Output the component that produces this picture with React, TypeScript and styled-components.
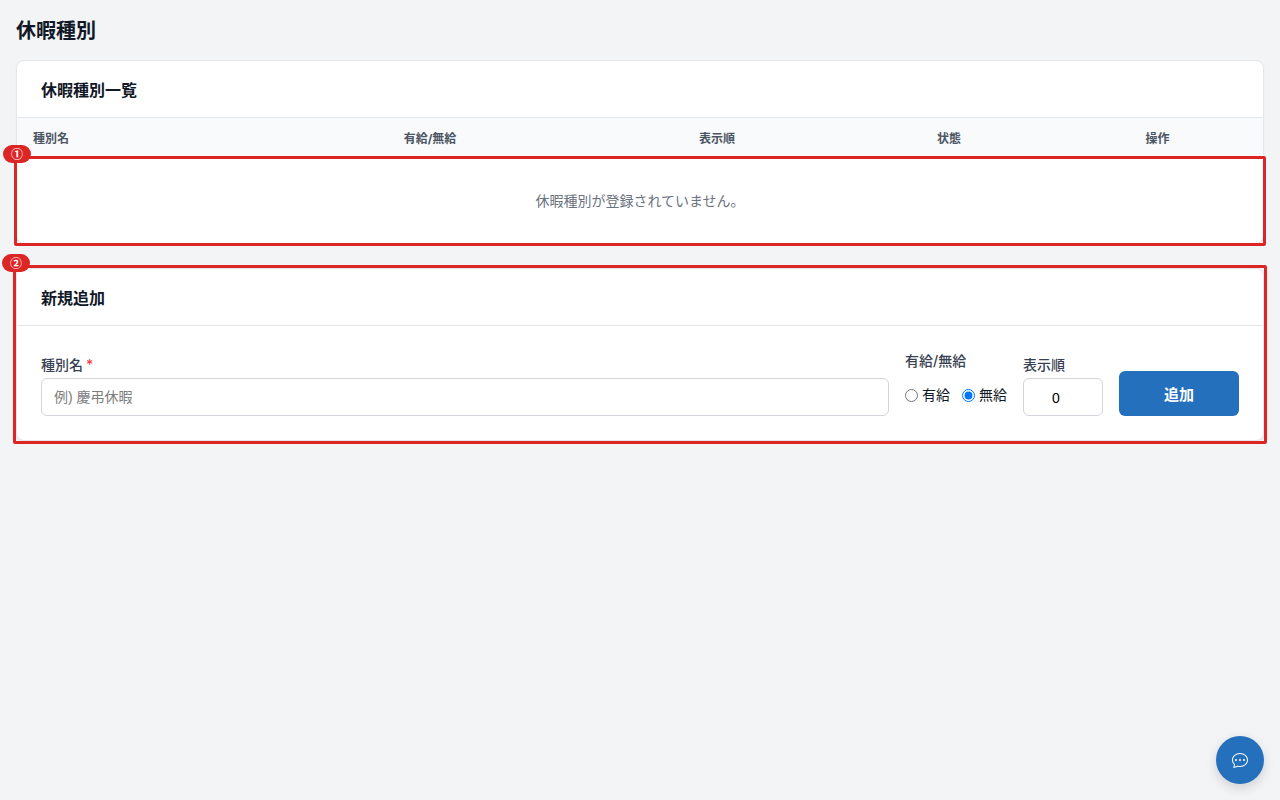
import React from "react";
import styled, { createGlobalStyle } from "styled-components";
import { BsChatDots } from "react-icons/bs";

const GlobalStyle = createGlobalStyle`
    html, body { margin: 0; padding: 0; }
    body {
        background: #f3f4f6;
        color: #111827;
        font-family: Inter, "Noto Sans CJK JP", "Noto Sans", sans-serif;
    }
`;

const Page = styled.main`
    min-height: 800px;
    box-sizing: border-box;
    padding: 17px 16px 16px;
    display: flex;
    flex-direction: column;
`;

const PageTitle = styled.h1`
    margin: 0 0 15px;
    font-size: 20px;
    line-height: 28px;
    font-weight: 700;
    color: #111827;
`;

const Card = styled.section<{ $gap?: number }>`
    position: relative;
    margin-top: ${(p) => p.$gap ?? 0}px;
    background: #fff;
    border: 1px solid #e5e7eb;
    border-radius: 8px;
    box-shadow: 0 1px 2px rgba(0, 0, 0, 0.05);
`;

const CardHeader = styled.div`
    height: 56px;
    padding: 0 24px;
    display: flex;
    align-items: center;
    border-bottom: 1px solid #e5e7eb;
`;

const CardTitle = styled.h2`
    margin: 0;
    font-size: 16px;
    font-weight: 600;
    color: #111827;
`;

const TableHead = styled.div`
    display: grid;
    grid-template-columns: 255px 316px 258px 206px 1fr;
    box-sizing: border-box;
    height: 40px;
    padding-bottom: 2px;
    align-items: center;
    background: #f9fafb;
`;

const HeadCell = styled.div<{ $left?: boolean }>`
    font-size: 12px;
    font-weight: 700;
    color: #4b5563;
    text-align: ${(p) => (p.$left ? "left" : "center")};
    padding-left: ${(p) => (p.$left ? "16px" : "0")};
`;

const EmptyRow = styled.div`
    box-sizing: border-box;
    height: 85px;
    padding-bottom: 2px;
    display: flex;
    align-items: center;
    justify-content: center;
    font-size: 14px;
    color: #6b7280;
`;

const FormRow = styled.form`
    display: flex;
    align-items: flex-end;
    gap: 16px;
    padding: 24px;
`;

const NameField = styled.div`
    flex: 1;
    display: flex;
    flex-direction: column;
`;

const FieldLabel = styled.label`
    display: block;
    font-size: 14px;
    line-height: 20px;
    font-weight: 500;
    color: #374151;
    margin-bottom: 3px;
`;

const Required = styled.span`
    color: #ef4444;
    margin-left: 3px;
`;

const TextInput = styled.input`
    box-sizing: border-box;
    width: 100%;
    height: 38px;
    padding: 0 12px;
    border: 1px solid #d1d5db;
    border-radius: 6px;
    background: #fff;
    font-family: "Liberation Sans", "Noto Sans CJK JP", sans-serif;
    font-size: 14px;
    color: #111827;

    &::placeholder {
        color: #7d7d7d;
    }
`;

const PaidField = styled.div`
    box-sizing: border-box;
    display: flex;
    flex-direction: column;
    height: 66px;
    padding-top: 1px;
`;

const RadioRow = styled.div`
    display: flex;
    gap: 12px;
    margin-top: 11px;
`;

const RadioLabel = styled.label`
    display: flex;
    align-items: center;
    gap: 4px;
    font-size: 14px;
    line-height: 20px;
    color: #111827;
`;

const Radio = styled.input`
    width: 13px;
    height: 13px;
    margin: 0;
`;

const OrderField = styled.div`
    width: 80px;
`;

const OrderInput = styled.input`
    box-sizing: border-box;
    width: 100%;
    height: 38px;
    padding: 2px 8px 0 9px;
    border: 1px solid #d1d5db;
    border-radius: 6px;
    background: #fff;
    text-align: center;
    font-family: "Liberation Sans", sans-serif;
    font-size: 14px;
    color: #000;
`;

const AddButton = styled.button`
    width: 120px;
    height: 45px;
    border: none;
    border-radius: 6px;
    background: #2570bc;
    color: #fff;
    font-family: inherit;
    font-size: 15px;
    font-weight: 600;
`;

const Highlight = styled.div<{ $top: number; $bottom: number; $side: number }>`
    position: absolute;
    top: ${(p) => p.$top}px;
    bottom: ${(p) => p.$bottom}px;
    left: ${(p) => p.$side}px;
    right: ${(p) => p.$side}px;
    border: 3px solid #dc2626;
    border-radius: 2px;
    pointer-events: none;
`;

const Marker = styled.span`
    position: absolute;
    top: -14px;
    left: -14px;
    width: 28px;
    height: 18px;
    border-radius: 9px;
    background: #dc2626;
    color: #fff;
    font-family: "Noto Sans CJK JP", sans-serif;
    font-size: 12px;
    font-weight: 700;
    line-height: 18px;
    text-align: center;
`;

const ChatButton = styled.button`
    position: fixed;
    right: 16px;
    bottom: 16px;
    width: 48px;
    height: 48px;
    padding: 0;
    border: none;
    border-radius: 50%;
    background: #2570bc;
    color: #fff;
    display: flex;
    align-items: center;
    justify-content: center;
    box-shadow: 0 4px 12px rgba(0, 0, 0, 0.15);
`;

const columns = ["有給/無給", "表示順", "状態", "操作"];

export default function App() {
    return (
        <Page>
            <GlobalStyle />
            <PageTitle>休暇種別</PageTitle>

            <Card>
                <CardHeader>
                    <CardTitle>休暇種別一覧</CardTitle>
                </CardHeader>
                <TableHead>
                    <HeadCell $left>種別名</HeadCell>
                    {columns.map((c) => (
                        <HeadCell key={c}>{c}</HeadCell>
                    ))}
                </TableHead>
                <EmptyRow>休暇種別が登録されていません。</EmptyRow>
                <Highlight $top={95} $bottom={-3} $side={-3}>
                    <Marker>①</Marker>
                </Highlight>
            </Card>

            <Card $gap={24}>
                <CardHeader>
                    <CardTitle>新規追加</CardTitle>
                </CardHeader>
                <FormRow>
                    <NameField>
                        <FieldLabel>
                            種別名<Required>*</Required>
                        </FieldLabel>
                        <TextInput placeholder="例) 慶弔休暇" />
                    </NameField>
                    <PaidField>
                        <FieldLabel>有給/無給</FieldLabel>
                        <RadioRow>
                            <RadioLabel>
                                <Radio type="radio" name="paid" />
                                有給
                            </RadioLabel>
                            <RadioLabel>
                                <Radio type="radio" name="paid" defaultChecked />
                                無給
                            </RadioLabel>
                        </RadioRow>
                    </PaidField>
                    <OrderField>
                        <FieldLabel>表示順</FieldLabel>
                        <OrderInput type="number" defaultValue="0" />
                    </OrderField>
                    <AddButton type="button">追加</AddButton>
                </FormRow>
                <Highlight $top={-4} $bottom={-4} $side={-4}>
                    <Marker>②</Marker>
                </Highlight>
            </Card>

            <ChatButton type="button" aria-label="chat">
                <BsChatDots size={16} />
            </ChatButton>
        </Page>
    );
}
